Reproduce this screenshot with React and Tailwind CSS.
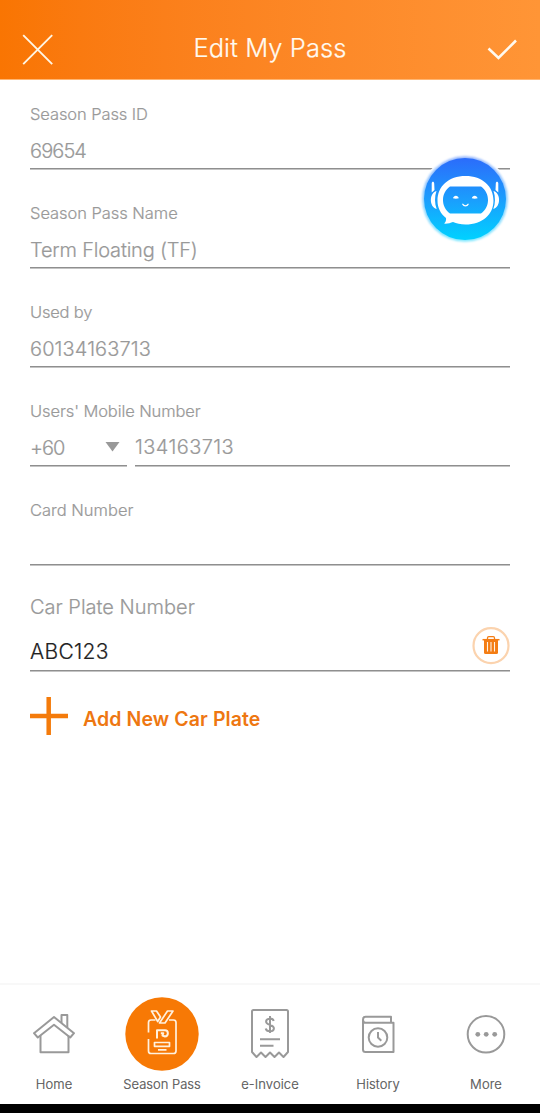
import React from "react";

const LINE = "border-b border-[#8f8f8f] shadow-[0_1px_0_#c4c4c4]";

function Field({ label, value, labelClass, valueClass }) {
  return (
    <div className="mb-[34px]">
      <div className={`h-5 text-[16.5px] leading-5 whitespace-nowrap ${labelClass}`}>{label}</div>
      <div className={`mt-[13px] h-8 text-[20px] leading-7 whitespace-nowrap ${LINE} ${valueClass}`}>{value}</div>
    </div>
  );
}

function ChatBot() {
  return (
    <svg className="absolute left-[415px] top-[149px]" width="100" height="100" viewBox="415 149 100 100">
      <defs>
        <linearGradient id="bot" x1="0" y1="0" x2="0" y2="1">
          <stop offset="0" stopColor="#2b6cfb" />
          <stop offset="0.5" stopColor="#1b9dfd" />
          <stop offset="1" stopColor="#00d2ff" />
        </linearGradient>
        <filter id="halo" x="-20%" y="-20%" width="140%" height="140%">
          <feGaussianBlur stdDeviation="0.9" />
        </filter>
      </defs>
      <circle cx="465" cy="199" r="45" fill="#fff" />
      <circle cx="465" cy="199" r="42.800" fill="url(#bot)" opacity="0.5" filter="url(#halo)" />
      <circle cx="465" cy="199" r="41" fill="url(#bot)" />
      <g fill="#fff">
        <path d="M431.700 183.500c0-2.200 2.500-2.200 2.500 0l.3 6.500-2.800 2.500zM498.300 183.500c0-2.200-2.500-2.200-2.500 0l-.3 6.500 2.800 2.500z" />
        <path d="M436.500 191c-7.500 2-7.500 16 .2 18-2.200-5.500-2.200-12.500-.2-18zM493.500 191c7.500 2 7.500 16-.2 18 2.200-5.500 2.200-12.500.2-18z" />
        <path fillRule="evenodd" d="M465.500 176c17 0 28 10.500 28 24.500s-11 24-28 24c-5 0-9-1-12.500-2.500-2.500 1-6 2-9 1.600 1.600-1.200 2.400-3.500 2-5.600-5.500-4.400-8.500-10.300-8.500-17.500 0-14 11-24.500 28-24.500zM450 186.500c-4.600 3.500-7 8-7 13.500s2.400 10 7 13.500h31c4.600-3.500 7-8 7-13.500s-2.400-10-7-13.500z" />
        <path d="M453 198.300c.6-3.400 5.200-3.400 5.800 0-1.800.6-4 .6-5.800 0zM471.800 198.300c.6-3.400 5.200-3.400 5.800 0-1.800.6-4 .6-5.800 0z" />
      </g>
      <path d="M462.800 204.300c1 2 4.300 2 5.300 0" fill="none" stroke="#fff" strokeWidth="1.300" strokeLinecap="round" />
    </svg>
  );
}

function HomeIcon() {
  return (
    <svg width="46" height="46" viewBox="31 1010 46 46" fill="none" stroke="#999" strokeWidth="2" strokeLinejoin="round">
      <path d="M54 1016l20 16.200-3.800 4.300L54 1023.800l-16.200 12.700-3.800-4.300z" />
      <path d="M40.500 1034.500v16.800h28v-16.800M61.500 1022v-8h5.800v12.700" />
    </svg>
  );
}

function PassIcon() {
  return (
    <svg width="74" height="74" viewBox="125 997 74 74" fill="none" stroke="#fff1df" strokeWidth="1.700" strokeLinejoin="round">
      <circle cx="162" cy="1034" r="36.700" fill="#f77905" stroke="none" />
      <path d="M155.500 1020h-4.500q-2.500 0-2.500 2.500v10M148.500 1039v12q0 2.500 2.500 2.500h22.500q2.500 0 2.500-2.500v-28.500q0-2.500-2.500-2.500H169" />
      <path d="M151.500 1011h5l4 6-2.800 4.500zM167.500 1011h5.500l-8 12h-5.500z" />
      <path d="M157 1038.500v-8.300h8c3.800 0 3.800 6.300 0 6.300l-2.500-1 .8-2.300h-2.500" strokeWidth="2" />
      <path d="M154.500 1042.500h15v3.800h-15zM158 1049.800h8.500" />
    </svg>
  );
}

function InvoiceIcon() {
  return (
    <svg width="42" height="54" viewBox="249 1007 42 54" fill="none" stroke="#999" strokeWidth="2" strokeLinejoin="round">
      <path d="M252 1052v-40.500q0-1.500 1.500-1.500h33q1.500 0 1.500 1.500v40.500l-4.500 5-4.500-4.500-4.500 4.500-4.500-4.500-4.500 4.500-4.500-4.500-4.500 4.500z" />
      <path d="M273.700 1021c-1-3.500-7.800-3-7.600.7.200 3.800 7.700 2.500 7.800 6.500 0 4-7.400 4-8.200.3M270 1016v17" />
      <path d="M260 1039.200h20M260 1045.800h13.500" />
    </svg>
  );
}

function HistoryIcon() {
  return (
    <svg width="38" height="42" viewBox="359 1013 38 42" fill="none" stroke="#999" strokeWidth="2" strokeLinejoin="round">
      <path d="M363 1019.500v30q0 2.500 2.500 2.500H393.500v-29.300H365.500q-2.500 0-2.500-3t2.500-3h25.500v6" />
      <circle cx="378" cy="1037.500" r="9.300" />
      <path d="M378 1032v5.500l3.300 3.200" />
    </svg>
  );
}

function MoreIcon() {
  return (
    <svg width="42" height="42" viewBox="465 1013 42 42" fill="none" stroke="#999" strokeWidth="2">
      <circle cx="486" cy="1034.300" r="18.300" />
      <g fill="#999" stroke="none">
        <circle cx="477.800" cy="1034.300" r="2.400" />
        <circle cx="486.200" cy="1034.300" r="2.400" />
        <circle cx="494.700" cy="1034.300" r="2.400" />
      </g>
    </svg>
  );
}

function TrashIcon() {
  return (
    <svg width="38" height="38" viewBox="472 627 38 38" fill="none" stroke="#f47d14">
      <circle cx="491" cy="645.700" r="17.500" stroke="#fbd3ae" strokeWidth="2.200" />
      <path d="M487.500 639v-1q0-1.300 1.300-1.300h4.400q1.300 0 1.300 1.300v1" strokeWidth="1.300" />
      <path d="M482.500 639.700h17" strokeWidth="1.500" />
      <path d="M484 640h14v12.500q0 1.500-1.500 1.500h-11q-1.500 0-1.500-1.500z" fill="#f47d14" stroke="none" />
      <path d="M487.500 642v9.500M491 642v9.500M494.500 642v9.500" stroke="#fff3e6" strokeWidth="1.100" />
    </svg>
  );
}

const tabs = [
  { label: "Home", icon: <HomeIcon />, spacing: "tracking-[0.1px]" },
  { label: "Season Pass", icon: <PassIcon />, spacing: "tracking-[0px]" },
  { label: "e-Invoice", icon: <InvoiceIcon />, spacing: "tracking-[0.1px]" },
  { label: "History", icon: <HistoryIcon />, spacing: "tracking-[0.1px]" },
  { label: "More", icon: <MoreIcon />, spacing: "tracking-[0.1px]" },
];

export default function App() {
  return (
    <div className="relative flex h-[1113px] w-[540px] flex-col overflow-hidden bg-white font-['Inter','Noto_Sans',sans-serif] font-light text-[#999] [-webkit-text-stroke:0.2px_currentColor]">
      <header className="flex h-20 shrink-0 items-start justify-between border-b border-[#ffb673] bg-linear-to-r from-[#f97502] to-[#ff9536] px-[22px] text-white">
        <svg className="mt-[34px]" width="32" height="32" viewBox="0 0 32 32" fill="none" stroke="#fff6e5" strokeWidth="1.900">
          <path d="M1.200 1.200l29 29M30.200 1.200l-29 29" />
        </svg>
        <h1 className="mt-[30px] text-[25.5px] leading-9 tracking-[0.1px] whitespace-nowrap text-[#fffaf0]">Edit My Pass</h1>
        <svg className="mt-[34px]" width="32" height="32" viewBox="486 34 32 32" fill="none" stroke="#fffaf0" strokeWidth="2.600">
          <path d="M488.500 48.500l10 9.500 17.500-17.500" />
        </svg>
      </header>

      <main className="flex-1 px-[30px] pt-6">
        <Field label="Season Pass ID" value="69654" labelClass="tracking-[-0.1px]" valueClass="tracking-[-0.9px]" />
        <Field label="Season Pass Name" value="Term Floating (TF)" labelClass="tracking-[-0.05px]" valueClass="tracking-[-0.2px]" />
        <Field label="Used by" value="60134163713" labelClass="tracking-[-0.2px]" valueClass="tracking-[0.1px]" />
        <div className="mb-[34px]">
          <div className="h-5 text-[16.5px] leading-5 tracking-[-0.1px] whitespace-nowrap">Users&#39; Mobile Number</div>
          <div className="mt-[13px] flex gap-2 text-[20px] leading-7">
            <div className={`flex h-8 w-[97px] justify-between pr-[7px] ${LINE}`}>
              <span className="tracking-[-1px]">+60</span>
              <svg className="mt-[8px]" width="15" height="10" viewBox="0 0 15 10">
                <path d="M0.500 0h14L7.500 9.500z" fill="#999" />
              </svg>
            </div>
            <div className={`h-8 flex-1 leading-[26px] tracking-[0.4px] ${LINE}`}>134163713</div>
          </div>
        </div>
        <Field label="Card Number" value="" labelClass="tracking-[0px]" valueClass="" />

        <div className="-mt-1 h-6 text-[20px] leading-6 tracking-[0px] whitespace-nowrap">Car Plate Number</div>
        <div className={`mt-2 flex h-11 items-start justify-between ${LINE}`}>
          <span className="pt-[11px] text-[21px] leading-7 tracking-[0.3px] text-[#222]">ABC123</span>
          <TrashIcon />
        </div>
        <div className="mt-[26px] flex items-start gap-[15px]">
          <svg width="38" height="38" viewBox="0 0 38 38" fill="none" stroke="#f47b0b" strokeWidth="4.500">
            <path d="M18.700 0v38M0 19h38" />
          </svg>
          <span className="mt-[8px] text-[19.5px] leading-7 font-semibold tracking-[0.1px] whitespace-nowrap text-[#ee7711] [-webkit-text-stroke:0]">Add New Car Plate</span>
        </div>
      </main>

      <nav className="flex h-[121px] shrink-0 border-t-2 border-[#f8f8f8] bg-white">
        {tabs.map((tab) => (
          <div key={tab.label} className="flex w-[108px] flex-col items-center pt-3">
            <div className="flex h-[74px] items-center">{tab.icon}</div>
            <span className={`mt-[3px] text-[13px] leading-5 whitespace-nowrap text-[#555] ${tab.spacing}`}>{tab.label}</span>
          </div>
        ))}
      </nav>
      <div className="h-[9px] shrink-0 bg-black" />
      <ChatBot />
    </div>
  );
}
